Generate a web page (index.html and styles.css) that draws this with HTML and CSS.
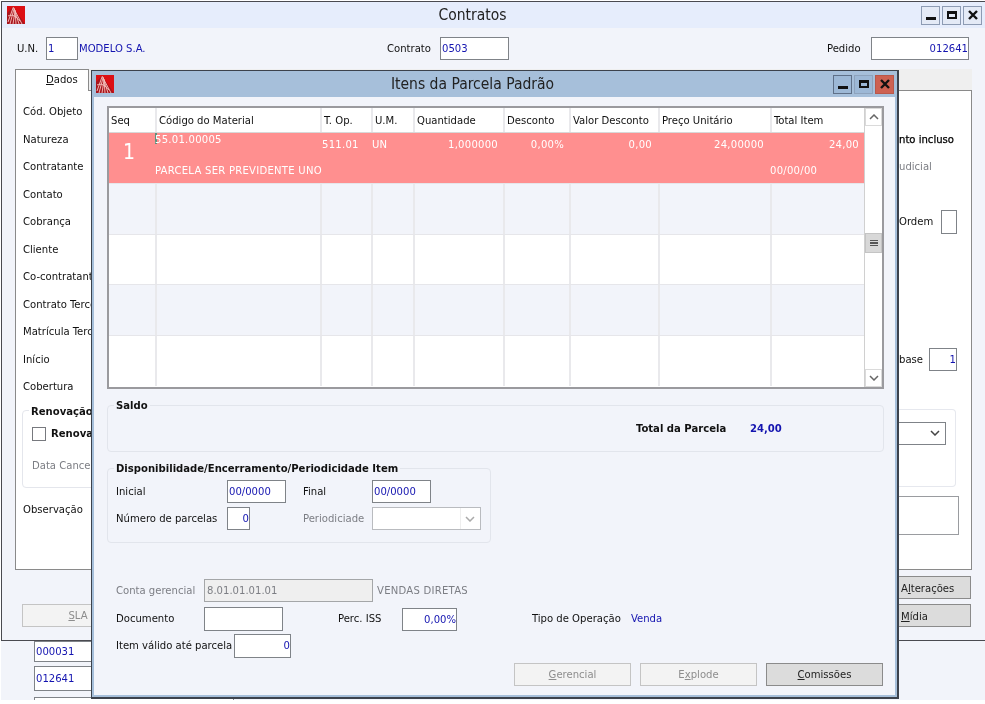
FILE: index.html
```html
<!DOCTYPE html>
<html lang="pt">
<head>
<meta charset="utf-8">
<title>Contratos</title>
<link rel="stylesheet" href="styles.css">
</head>
<body>
<svg class="defs" width="0" height="0">
  <symbol id="logo" viewBox="0 0 18 18">
    <rect width="18" height="18" fill="#dc0f14"/>
    <path d="M0 18V7L6 1l12 17z" fill="#a8141c"/>
    <path d="M1 16L6 2M3 18L7 3M6 18L8 5M9 18L8 4M12 18L7 2M15 18L6 1M1 10c4-2 8 0 12 5" fill="none" stroke="#f7c4c0" stroke-width=".9"/>
  </symbol>
  <symbol id="chev" viewBox="0 0 10 6">
    <path d="M1 1l4 4 4-4" fill="none" stroke="currentColor" stroke-width="1.5"/>
  </symbol>
</svg>

<div class="desk">
  <section class="win back">
    <header class="bar bar-back">
      <svg class="logo"><use href="#logo"/></svg>
      <h1 class="ttl">Contratos</h1>
      <div class="ctrls">
        <span class="ctl"><i class="g-min"></i></span>
        <span class="ctl"><i class="g-max"></i></span>
        <span class="ctl"><svg class="g-x" viewBox="0 0 10 10"><path d="M1 1l8 8M9 1l-8 8"/></svg></span>
      </div>
    </header>
    <div class="top-row">
      <span class="t w-un">U.N.</span>
      <span class="fld w32 blue">1</span>
      <span class="t blue modelo">MODELO S.A.</span>
      <span class="t contrato">Contrato</span>
      <span class="fld w69 blue">0503</span>
      <span class="t pedido">Pedido</span>
      <span class="fld w98 blue right">012641</span>
    </div>
    <div class="tabs">
      <span class="tab"><u>D</u>ados</span>
    </div>
    <div class="panel">
      <div class="pcol">
        <div class="lbl">Cód. Objeto</div>
        <div class="lbl">Natureza</div>
        <div class="lbl">Contratante</div>
        <div class="lbl">Contato</div>
        <div class="lbl">Cobrança</div>
        <div class="lbl">Cliente</div>
        <div class="lbl">Co-contratante</div>
        <div class="lbl">Contrato Terceiro</div>
        <div class="lbl">Matrícula Terceiro</div>
        <div class="lbl">Início</div>
        <div class="lbl">Cobertura</div>
        <fieldset class="renov">
          <legend class="lg">Renovação</legend>
          <div class="chk-row"><span class="chk"></span><b class="t">Renovar</b></div>
          <div class="t gray cancel">Data Cance</div>
        </fieldset>
        <div class="lbl obs">Observação</div>
      </div>
      <div class="pside">
        <div class="lbl"></div>
        <div class="lbl strong">nto incluso</div>
        <div class="lbl gray">udicial</div>
        <div class="lbl"></div>
        <div class="lbl ordem"><span class="o-l">Ordem</span><span class="fld box-o"></span></div>
        <div class="lbl"></div>
        <div class="lbl"></div>
        <div class="lbl"></div>
        <div class="lbl"></div>
        <div class="lbl ordem"><span class="b-l">base</span><span class="fld box-b blue right">1</span></div>
        <div class="lbl"></div>
        <div class="side-group"><span class="side-sel"><svg class="chev"><use href="#chev"/></svg></span></div>
        <div class="side-box"></div>
      </div>
    </div>
    <div class="foot">
      <div class="foot-r"><span class="btn on side-btn">A<u>l</u>terações</span></div>
      <div class="foot-b">
        <span class="btn off sla"><u>S</u>LA</span>
        <span class="btn on side-btn"><u>M</u>ídia</span>
      </div>
    </div>
  </section>
  <div class="under">
    <span class="fld w100 blue">000031</span>
    <span class="fld w100 blue">012641</span>
    <span class="fld w100"></span>
  </div>

  <section class="win dialog">
    <div class="frame">
      <header class="bar bar-dlg">
        <svg class="logo"><use href="#logo"/></svg>
        <h2 class="ttl">Itens da Parcela Padrão</h2>
        <div class="ctrls">
          <span class="ctl dk"><i class="g-min"></i></span>
          <span class="ctl dk2"><i class="g-max"></i></span>
          <span class="ctl red"><svg class="g-x" viewBox="0 0 10 10"><path d="M1 1l8 8M9 1l-8 8"/></svg></span>
        </div>
      </header>
      <div class="dbody">
        <div class="grid">
          <div class="gmain">
            <div class="ghead cols">
              <span>Seq</span><span>Código do Material</span><span>T. Op.</span><span>U.M.</span><span>Quantidade</span><span>Desconto</span><span>Valor Desconto</span><span>Preço Unitário</span><span>Total Item</span>
            </div>
            <div class="rec cols">
              <span class="seq">1</span>
              <span class="code">55.01.00005</span>
              <span class="c2">511.01</span>
              <span class="c2 un">UN</span>
              <span class="c2 r">1,000000</span>
              <span class="c2 r">0,00%</span>
              <span class="c2 r r8">0,00</span>
              <span class="c2 r r8">24,00000</span>
              <span class="c2 r r5">24,00</span>
              <span class="desc">PARCELA SER PREVIDENTE UNO</span>
              <span class="date">00/00/00</span>
            </div>
            <div class="row cols alt"><i></i><i></i><i></i><i></i><i></i><i></i><i></i><i></i><i></i></div>
            <div class="row cols"><i></i><i></i><i></i><i></i><i></i><i></i><i></i><i></i><i></i></div>
            <div class="row cols alt"><i></i><i></i><i></i><i></i><i></i><i></i><i></i><i></i><i></i></div>
            <div class="row cols last"><i></i><i></i><i></i><i></i><i></i><i></i><i></i><i></i><i></i></div>
          </div>
          <div class="sbar">
            <span class="sbtn"><svg class="chev up"><use href="#chev"/></svg></span>
            <span class="thumb"><i></i><i></i><i></i></span>
            <span class="sbtn dn"><svg class="chev"><use href="#chev"/></svg></span>
          </div>
        </div>

        <fieldset class="fs saldo">
          <legend class="lg">Saldo</legend>
          <div class="tot"><b class="t tl">Total da Parcela</b><b class="t blue">24,00</b></div>
        </fieldset>

        <fieldset class="fs disp">
          <legend class="lg">Disponibilidade/Encerramento/Periodicidade Item</legend>
          <div class="frow">
            <span class="t l111">Inicial</span><span class="fld w59 blue">00/0000</span>
            <span class="t l69 ml17">Final</span><span class="fld w59 blue">00/0000</span>
          </div>
          <div class="frow r2">
            <span class="t l111">Número de parcelas</span><span class="fld w23 blue right">0</span>
            <span class="t l69 ml53 gray">Periodiciade</span>
            <span class="fld w109 dis-sel"><em></em><svg class="chev"><use href="#chev"/></svg></span>
          </div>
        </fieldset>

        <div class="form">
          <div class="frow">
            <span class="t l88 gray">Conta gerencial</span>
            <span class="fld w169 ro">8.01.01.01.01</span>
            <span class="t gray vd">VENDAS DIRETAS</span>
          </div>
          <div class="frow mt5 h24">
            <span class="t l88">Documento</span>
            <span class="fld w79 tall"></span>
            <span class="t perc">Perc. ISS</span>
            <span class="fld w55 blue right">0,00%</span>
            <span class="t tipo">Tipo de Operação</span>
            <span class="t blue">Venda</span>
          </div>
          <div class="frow mt3 h24">
            <span class="t l118">Item válido até parcela</span>
            <span class="fld w57 blue right tall">0</span>
          </div>
          <div class="actions">
            <span class="btn off w117"><u>G</u>erencial</span>
            <span class="btn off w117">E<u>x</u>plode</span>
            <span class="btn on w117"><u>C</u>omissões</span>
          </div>
        </div>
      </div>
    </div>
  </section>
</div>
</body>
</html>
```

FILE: styles.css
```css
* { box-sizing: border-box; }
html, body { margin: 0; padding: 0; background: #fff; }
body { font: 11.2px/14px "DejaVu Sans", Verdana, sans-serif; font-stretch: condensed; color: #111; overflow: hidden; }
.defs { position: absolute; }
.desk { position: relative; width: 985px; height: 700px; padding-left: 1px; padding-top: 1px; background: #fff; filter: blur(.3px); }

.win { background: #f2f4fa; }
.back { width: 984px; height: 640px; border: 1px solid #4a4a50; border-right: 0; }
.bar { display: flex; align-items: center; position: relative; }
.bar-back { height: 26px; background: #e6edfc; padding-left: 5px; }
.logo { width: 18px; height: 18px; display: block; }
.ttl { position: absolute; left: 0; right: 42px; margin: 0; text-align: center; font-weight: 400; font-size: 15.5px; line-height: 20px; color: #222; pointer-events: none; }
.ctrls { margin-left: auto; display: flex; gap: 2px; padding-right: 3px; position: relative; }
.ctl { width: 19px; height: 19px; display: flex; align-items: center; justify-content: center; background: #e4eaf6; border: 1px solid #8d9bb3; }
.ctl.dk { background: #9db8d6; border-color: #5f7088; }
.ctl.dk2 { background: #9db8d6; border-color: #8ea3bd; }
.ctl.red { background: #cd6152; border-color: #b9574a; }
.g-min { display: block; width: 10px; height: 3px; background: #111; margin-top: 6px; }
.g-max { display: block; width: 10px; height: 8px; border: 2px solid #111; border-top-width: 3px; }
.g-x { width: 10px; height: 10px; fill: none; stroke: #111; stroke-width: 2.4; }

.t { white-space: nowrap; }
.blue { color: #1414b0; }
.gray { color: #7c7e84; }
.right { text-align: right; }
.fld { display: block; height: 23px; line-height: 21px; padding: 0 0 0 1px; background: #fff; border: 1px solid #7f8388; white-space: nowrap; flex: none; }
.tall { height: 24px; line-height: 22px; }

.top-row { display: flex; align-items: center; height: 23px; margin-top: 9px; padding-left: 15px; }
.w-un { width: 29px; }
.w32 { width: 32px; }
.w69 { width: 69px; }
.w98 { width: 98px; }
.modelo { margin-left: 1px; width: 308px; }
.contrato { width: 53px; }
.pedido { margin-left: 318px; width: 44px; }

.tabs { margin: 9px 13px 0 13px; height: 21px; background: #efefef; }
.tab { display: block; width: 74px; height: 22px; position: relative; background: #fff; border: 1px solid #8a8a8a; border-bottom: 0; padding: 3px 0 0 30px; line-height: 14px; }

.panel { display: grid; grid-template-columns: 1fr 72px; margin: 0 13px 0; height: 480px; background: #fff; border: 1px solid #8a8a8a; padding-top: 7px; }
.pcol { padding-left: 7px; min-width: 0; }
.lbl { height: 27.5px; line-height: 27.5px; white-space: nowrap; }
.strong { color: #000; font-weight: 400; -webkit-text-stroke: .25px #000; }
.ordem { display: flex; align-items: center; }
.o-l { width: 42px; }
.b-l { width: 30px; }
.box-o { width: 16px; height: 24px; }
.box-b { width: 28px; height: 23px; }
.side-group { width: 57px; height: 78px; margin-top: 8px; border: 1px solid #e6e8ee; border-left: 0; border-radius: 0 4px 4px 0; padding-top: 12px; }
.side-sel { display: flex; align-items: center; justify-content: flex-end; height: 23px; width: 47px; border: 1px solid #7f8388; border-left: 0; padding-right: 5px; background: #fff; color: #444; }
.side-box { width: 60px; height: 39px; margin-top: 9px; border: 1px solid #9a9ca0; border-left: 0; }
.chev { width: 10px; height: 6px; display: block; }

.renov { margin: 2px 0 0 -1px; width: 200px; height: 85px; padding: 8px 0 0 9px; border: 1px solid #e4e6ec; border-radius: 4px; min-width: 0; }
.lg { padding: 2px 2px 0; line-height: 14px; font-weight: 700; font-size: 11.2px; color: #111; white-space: nowrap; }
.renov .lg { margin-left: -3px; }
.saldo .lg { margin-left: 6px; }
.disp .lg { margin-left: -2px; }
.chk-row { display: flex; align-items: center; gap: 5px; }
.chk { width: 14px; height: 14px; background: #fff; border: 1px solid #77797e; }
.cancel { margin-top: 18px; }
.obs { margin-top: 8px; }

.foot { padding: 6px 14px 0 20px; }
.foot-r { display: flex; justify-content: flex-end; }
.foot-b { display: flex; justify-content: space-between; margin-top: 5px; }
.btn { display: block; height: 23px; line-height: 21px; text-align: center; border: 1px solid #8b8b8b; white-space: nowrap; flex: none; }
.btn.on { background: #dcdcdc; color: #222; }
.btn.off { background: #f3f3f3; border-color: #c4c4c4; color: #8d8d8d; }
.side-btn { width: 84px; text-align: left; padding-left: 13px; line-height: 23px; }
.sla { width: 112px; }

.under { height: 59px; background: #f2f4fa; padding: 0 0 0 33px; }
.under .fld { height: 21px; line-height: 19px; width: 200px; margin-bottom: 4px; }
.under .fld + .fld { height: 25px; line-height: 23px; }
.under .fld:last-child { height: 3px; margin: 6px 0 0; border-bottom: 0; }

.dialog { position: absolute; left: 91px; top: 70px; width: 808px; height: 629px; border: 1px solid #3c424c; border-width: 1px 2px 2px 1px; }
.frame { height: 100%; border: solid #a6bfda; border-width: 0 2px 2px 2px; }
.bar-dlg { height: 26px; background: #a6bfda; margin: 0 -2px; padding-left: 4px; }
.bar-dlg .ttl { right: 44px; }
.dbody { padding: 9px 0 0 13px; height: 600px; }

.grid { display: flex; width: 777px; height: 283px; border: 2px solid #9a9a9e; background: #fff; }
.gmain { width: 755px; flex: none; }
.cols { display: grid; grid-template-columns: 48px 165px 51px 42px 90px 66px 89px 112px 92px; }
.ghead { height: 25px; background: #fff; border-bottom: 1px solid #d8d8d8; }
.ghead span { padding: 6px 0 0 2px; border-right: 2px solid #e9e9ec; white-space: nowrap; overflow: hidden; }
.ghead span:last-child { border-right: 0; }
.rec { height: 51px; background: #ff8f8f; color: #fff; grid-template-rows: 29px 22px; border-bottom: 1px solid #e6e6ea; letter-spacing: .25px; }
.rec .seq { grid-row: 1 / 3; font-size: 21px; line-height: 39px; text-align: center; padding-right: 8px; letter-spacing: 0; }
.rec .code { margin-left: -2px; padding-left: 0; box-shadow: inset 2px 0 0 #5e8f7c; height: 11px; line-height: 14px; width: 78px; white-space: nowrap; }
.rec .c2 { padding-top: 5px; white-space: nowrap; }
.rec .un { margin-left: -1px; }
.rec .r { text-align: right; padding-right: 7px; }
.rec .r8 { padding-right: 8px; }
.rec .r5 { padding-right: 5px; }
.desc { grid-column: 2 / 6; grid-row: 2; margin-left: -2px; line-height: 18px; white-space: nowrap; }
.date { grid-column: 8 / 10; grid-row: 2; padding-left: 110px; line-height: 18px; white-space: nowrap; }
.row { height: 50.5px; background: #fff; border-bottom: 1px solid #e6e6ea; }
.row.alt { background: #f2f4fa; }
.row.last { border-bottom: 0; height: 50px; }
.row i { border-right: 2px solid #e9e9ec; }
.row i:last-child { border-right: 0; }

.sbar { flex: 1; display: flex; flex-direction: column; position: relative; border-left: 1px solid #d0d0d0; background: #fff; }
.sbtn { height: 18px; display: flex; align-items: center; justify-content: center; border: 1px solid #dadada; color: #666; background: #fff; }
.up { transform: rotate(180deg); }
.thumb { height: 20px; margin-top: 107px; background: #d8d8d8; border: 1px solid #c4c4c4; display: flex; flex-direction: column; align-items: center; justify-content: center; gap: 1px; }
.thumb i { display: block; width: 8px; height: 1.5px; background: #555; }
.sbtn.dn { margin-top: auto; }

.fs { margin: 0; padding: 0; min-width: 0; border: 1px solid #e2e5ec; border-radius: 4px; }
.saldo { width: 777px; height: 55px; margin-top: 8px; }
.tot { display: flex; padding: 9px 0 0 528px; }
.tl { width: 114px; }
.disp { width: 384px; height: 83px; margin-top: 8px; padding: 4px 0 0 8px; }
.frow { display: flex; align-items: center; }
.r2 { margin-top: 4px; }
.h24 { height: 24px; }
.l111 { width: 111px; }
.l69 { width: 69px; }
.l88 { width: 88px; }
.l118 { width: 118px; }
.ml17 { margin-left: 17px; }
.ml53 { margin-left: 53px; }
.w59 { width: 59px; }
.w23 { width: 23px; }
.w109 { width: 109px; }
.w169 { width: 169px; }
.w79 { width: 79px; }
.w55 { width: 55px; }
.w57 { width: 57px; }
.dis-sel { display: flex; align-items: center; justify-content: space-between; border-color: #b9bbbf; color: #aaa; padding: 0 5px 0 0; }
.dis-sel em { display: block; width: 88px; height: 100%; border-right: 1px solid #eee; }
.ro { background: #efefef; border-color: #a4a6a8; color: #7c7e84; padding-left: 2px; }
.vd { margin-left: 4px; letter-spacing: .25px; }
.form { margin-top: 36px; padding-left: 9px; }
.mt5 { margin-top: 5px; }
.mt3 { margin-top: 3px; }
.perc { margin-left: 55px; width: 64px; }
.tipo { margin-left: 75px; width: 99px; }
.actions { display: flex; justify-content: flex-end; gap: 9px; width: 767px; margin-top: 5px; }
.w117 { width: 117px; }
```
